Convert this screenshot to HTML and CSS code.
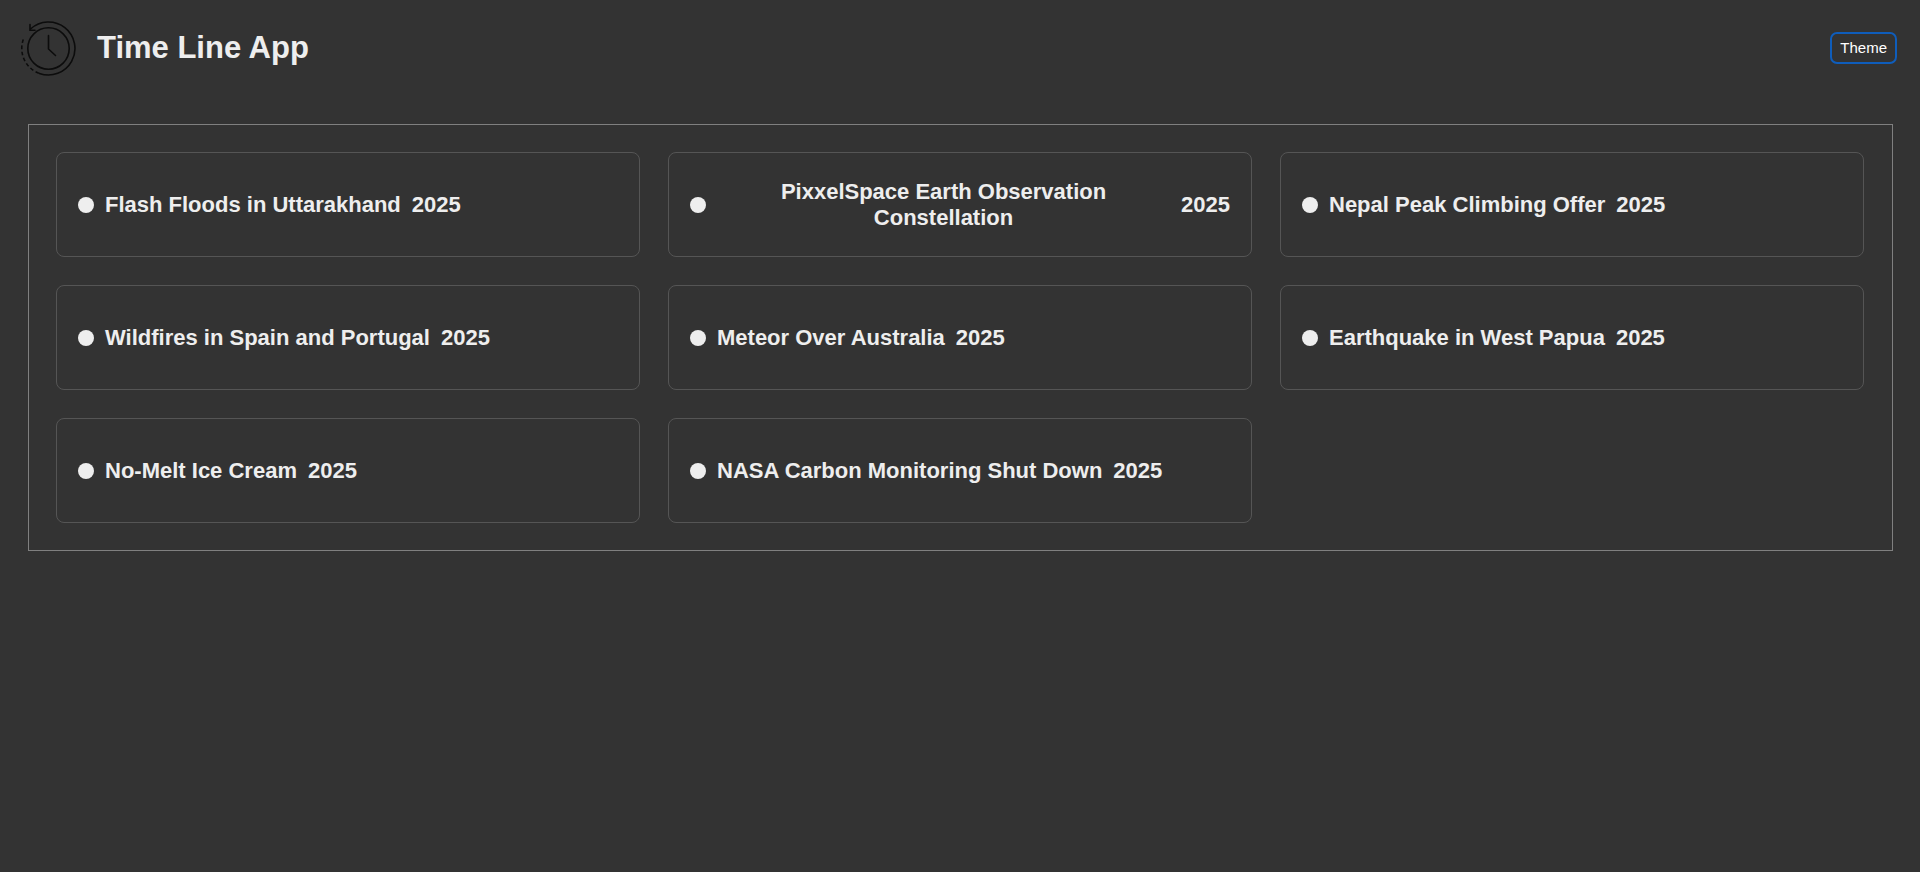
FILE: index.html
```html
<!DOCTYPE html>
<html lang="en">
<head>
<meta charset="utf-8">
<title>Time Line App</title>
<link rel="stylesheet" href="styles.css">
</head>
<body>
<header class="header">
  <svg class="logo" viewBox="0 0 56 56" aria-hidden="true">
    <circle cx="28.5" cy="28.5" r="20.7"/>
    <path d="M28.5 15.5V29L35.5 35.5"/>
    <path d="M10.5 9A26.5 26.5 0 1 1 19.4 53.4"/>
    <path d="M10 4.5V10.2H15"/>
    <path class="dashes" d="M3.3 19.5A26.5 26.5 0 0 0 19.4 53.4"/>
  </svg>
  <h1 class="title">Time Line App</h1>
  <button class="theme" type="button">Theme</button>
</header>
<main class="board">
  <article class="card"><span class="dot"></span><h2 class="event">Flash Floods in Uttarakhand</h2><span class="year">2025</span></article>
  <article class="card"><span class="dot"></span><h2 class="event">PixxelSpace Earth Observation Constellation</h2><span class="year">2025</span></article>
  <article class="card"><span class="dot"></span><h2 class="event">Nepal Peak Climbing Offer</h2><span class="year">2025</span></article>
  <article class="card"><span class="dot"></span><h2 class="event">Wildfires in Spain and Portugal</h2><span class="year">2025</span></article>
  <article class="card"><span class="dot"></span><h2 class="event">Meteor Over Australia</h2><span class="year">2025</span></article>
  <article class="card"><span class="dot"></span><h2 class="event">Earthquake in West Papua</h2><span class="year">2025</span></article>
  <article class="card"><span class="dot"></span><h2 class="event">No-Melt Ice Cream</h2><span class="year">2025</span></article>
  <article class="card"><span class="dot"></span><h2 class="event">NASA Carbon Monitoring Shut Down</h2><span class="year">2025</span></article>
</main>
</body>
</html>
```

FILE: styles.css
```css
* {
  box-sizing: border-box;
}

body {
  margin: 0;
  background: #333;
  color: #eee;
  font-family: "Liberation Sans", Arial, sans-serif;
}

.header {
  display: flex;
  align-items: center;
  gap: 21px;
  padding: 20px 23px 20px 20px;
}

.logo {
  width: 56px;
  height: 56px;
  fill: none;
  stroke: #0c0c0c;
  stroke-width: 1.6;
  stroke-linecap: round;
}

.dashes {
  stroke-dasharray: 3.6 2.6;
  stroke-linecap: butt;
}

.title {
  margin: 0;
  font-size: 31px;
  line-height: 36px;
}

.theme {
  margin-left: auto;
  padding: 5px 8px;
  border: 2px solid #0f5dbb;
  border-radius: 7px;
  background: transparent;
  color: #fff;
  font-family: inherit;
  font-size: 15px;
  line-height: 18px;
}

.board {
  display: grid;
  grid-template-columns: repeat(3, 1fr);
  gap: 28px;
  margin: 28px 27px 28px 28px;
  padding: 27px 28px 27px 27px;
  border: 1px solid #808080;
}

.card {
  display: flex;
  align-items: center;
  gap: 11px;
  min-height: 105px;
  padding: 21px;
  border: 1px solid #555;
  border-radius: 8px;
  font-size: 22px;
  line-height: 26px;
  font-weight: bold;
}

.dot {
  flex: none;
  width: 16px;
  height: 16px;
  border-radius: 50%;
  background: #eee;
}

.event {
  margin: 0;
  font-size: inherit;
  text-align: center;
}
```
